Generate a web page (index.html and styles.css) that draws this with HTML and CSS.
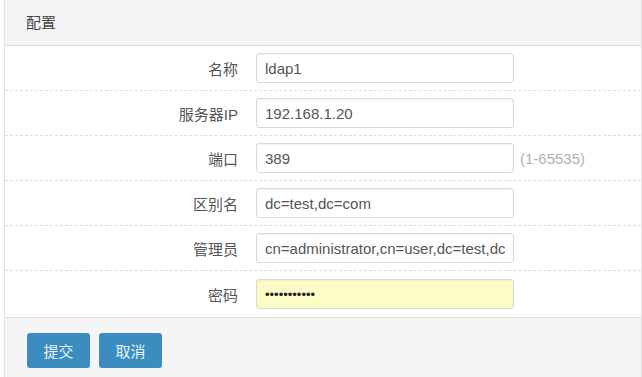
FILE: index.html
```html
<!DOCTYPE html>
<html>
<head lang="zh-CN">
    <meta charset="UTF-8">
    <title>配置</title>
    <link rel="stylesheet" href="styles.css">
</head>
<body>
<div class="panel">
    <div class="panel_head">配置</div>
    <div class="panel_body">
        <div class="row">
            <label class="lbl">名称</label>
            <input class="txt" type="text" value="ldap1">
        </div>
        <div class="row">
            <label class="lbl">服务器IP</label>
            <input class="txt" type="text" value="192.168.1.20">
        </div>
        <div class="row">
            <label class="lbl">端口</label>
            <input class="txt" type="text" value="389">
            <span class="tip">(1-65535)</span>
        </div>
        <div class="row">
            <label class="lbl">区别名</label>
            <input class="txt" type="text" value="dc=test,dc=com">
        </div>
        <div class="row">
            <label class="lbl">管理员</label>
            <input class="txt" type="text" value="cn=administrator,cn=user,dc=test,dc=com">
        </div>
        <div class="row last">
            <label class="lbl">密码</label>
            <input class="txt pwd" type="password" value="12345678901">
        </div>
    </div>
    <div class="panel_foot">
        <input class="btn" type="button" value="提交">
        <input class="btn" type="button" value="取消">
    </div>
</div>
</body>
</html>
```

FILE: styles.css
```css
body{
    margin: 0;
    font-family: "Liberation Sans", "Noto Sans CJK SC", sans-serif;
    font-size: 15px;
    color: #333;
    background: #fff;
}
.panel{
    margin-left: 4px;
    width: 636px;
    border-left: 1px solid #e2e2e2;
    border-right: 1px solid #e2e2e2;
}
.panel_head{
    height: 45px;
    line-height: 45px;
    padding-left: 21px;
    background: #f5f5f5;
    border-bottom: 1px solid #dcdcdc;
    font-size: 15px;
    color: #444;
}
.row{
    display: flex;
    align-items: center;
    height: 44px;
    border-bottom: 1px dashed #ddd;
}
.row.last{
    height: 46px;
    border-bottom: 1px solid #dcdcdc;
}
.lbl{
    width: 233px;
    text-align: right;
    color: #555;
}
.txt{
    margin-left: 18px;
    width: 258px;
    height: 30px;
    box-sizing: border-box;
    padding: 0 8px;
    border: 1px solid #d9d9d9;
    border-radius: 3px;
    box-shadow: inset 0 1px 2px rgba(0,0,0,0.06);
    font-family: "Liberation Sans", sans-serif;
    font-size: 15px;
    color: #555;
}
.pwd{
    background: #fbfcc6;
    color: #222;
    font-size: 13px;
}
.tip{
    margin-left: 6px;
    color: #b0b0b0;
}
.panel_foot{
    height: 59px;
    padding: 15px 0 0 22px;
    box-sizing: border-box;
    background: #f5f5f5;
    display: flex;
    align-items: flex-start;
    gap: 9px;
}
.btn{
    width: 63px;
    height: 35px;
    border: none;
    border-radius: 3px;
    background: #3b8dc0;
    color: #eaf3f9;
    font-family: "Noto Sans CJK SC", sans-serif;
    font-size: 15px;
    cursor: pointer;
}
```
